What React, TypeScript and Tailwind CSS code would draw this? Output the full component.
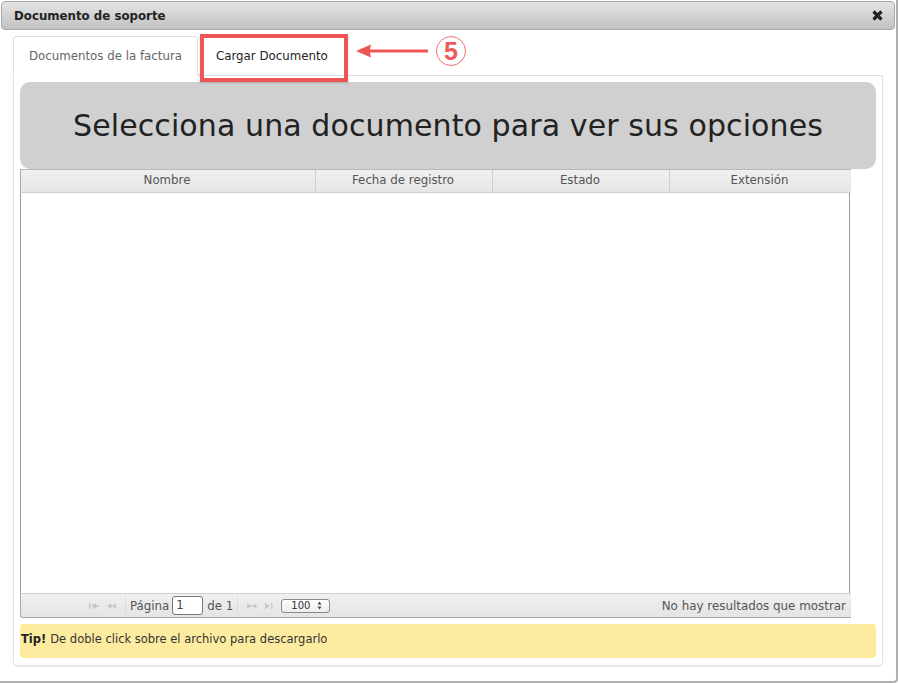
import React from "react";

const font = { fontFamily: '"DejaVu Sans", Verdana, sans-serif' };

function Pager({ d }: { d: string }) {
  return (
    <svg width="12" height="8" viewBox="0 0 12 8" className="mx-[3px]">
      <path d={d} fill="#c8c8c8" />
    </svg>
  );
}

function Sep() {
  return <div className="w-px h-[18px] bg-[#dcdcdc] mx-[1px]" />;
}

export default function App() {
  return (
    <div style={font} className="w-[898px] h-[683px] bg-white overflow-hidden relative">
      <div className="w-[898px] h-[683px] border-r-2 border-b-2 border-[#b0b0b0] rounded-br-[4px] flex flex-col">
        <div className="h-[29px] mt-px ml-px mr-[1px] flex items-center justify-between pl-[12px] pr-[10px] rounded-[4px] border border-[#a8a8a8] bg-gradient-to-b from-[#e4e4e4] to-[#c2c2c2]">
          <span className="text-[11.8px] font-bold text-[#222] pt-[2px]">Documento de soporte</span>
          <svg width="13" height="13" viewBox="0 0 13 13">
            <path d="M2.5 2.5 L10.5 10.5 M10.5 2.5 L2.5 10.5" stroke="#222" strokeWidth="3.2" strokeLinecap="butt" />
          </svg>
        </div>

        <div className="ml-[13px] mt-[6px] w-[870px] flex h-[40px] relative z-10">
          <div className="w-[185px] h-[40px] pt-[2px] border border-[#dfdfdf] border-b-white bg-white rounded-t-[4px] flex items-center justify-center text-[11.8px] text-[#666]">
            Documentos de la factura
          </div>
          <div className="w-[150px] h-[39px] pt-[2px] ml-[2px] flex items-center pl-[16px] text-[11.8px] text-[#222]">
            Cargar Documento
          </div>
        </div>

        <div className="ml-[13px] -mt-px w-[870px] h-[591px] border border-[#dfdfdf] rounded-b-[4px] pl-[6px] pt-[6px] shadow-[0_1px_1px_rgba(0,0,0,0.08)]">
          <div className="w-[856px] h-[87px] bg-[#d0d0d0] rounded-[10px] flex items-center justify-center text-[30px] text-[#222] tracking-[0.1px]">
            Selecciona una documento para ver sus opciones
          </div>

          <div className="w-[831px] h-[449px] flex flex-col">
            <div className="h-[24px] flex border-t border-[#b8b8b8] border-b border-b-[#cfcfcf] bg-gradient-to-b from-[#f0f0f0] to-[#e6e6e6] text-[11.8px] text-[#555] border-l border-l-[#a8a8a8]">
              <div className="w-[295px] border-r border-[#cfcfcf] flex items-center justify-center pr-[2px]">Nombre</div>
              <div className="w-[177px] border-r border-[#cfcfcf] flex items-center justify-center pr-[2px]">Fecha de registro</div>
              <div className="w-[177px] border-r border-[#cfcfcf] flex items-center justify-center pr-[2px]">Estado</div>
              <div className="flex-1 flex items-center justify-center pr-[2px]">Extensión</div>
            </div>
            <div className="flex-1 w-[830px] bg-white border-l border-r border-[#9c9c9c]" />
            <div className="h-[25px] flex items-center border-t border-[#cfcfcf] border-b border-b-[#a8a8a8] border-l border-l-[#a8a8a8] rounded-bl-[3px] bg-gradient-to-b from-[#f0f0f0] to-[#e4e4e4] text-[11.8px] text-[#555]">
              <div className="ml-[64px] flex items-center">
                <Pager d="M1 1h1.5v6H1zM3 4l5-3v6zM8 3h3v2H8z" />
                <Pager d="M1 4l4-3v6zM5 3h1v2H5zM6 4l4-3v6z" />
              </div>
              <div className="ml-[3px]"><Sep /></div>
              <span className="ml-[3px] pt-[2px]">Página</span>
              <div className="w-[31px] h-[19px] ml-[3px] border border-[#777] rounded-[3px] bg-white flex items-center pl-[3px] pt-px text-[#444]">1</div>
              <span className="ml-[4px] pt-[2px]">de 1</span>
              <div className="ml-[3px]"><Sep /></div>
              <div className="ml-[4px] flex items-center">
                <Pager d="M1 1l5 3-5 3zM6 3h3v2H6zM9 1l2 3-2 3z" />
                <Pager d="M1 1l5 3-5 3zM7 1h1.5v6H7z" />
              </div>
              <div className="w-[49px] h-[14px] ml-[2px] border border-[#8a8a8a] rounded-[3px] bg-gradient-to-b from-white to-[#ececec] flex items-center justify-between pl-[9px] pr-[7px] text-[10px] text-[#333]">
                <span>100</span>
                <svg width="5" height="9" viewBox="0 0 5 9">
                  <path d="M2.5 0.5L4.5 3.5H0.5zM2.5 8.5L0.5 5.5H4.5z" fill="#444" />
                </svg>
              </div>
              <span className="ml-auto mr-[5px] pt-[2px] text-[11.9px]">No hay resultados que mostrar</span>
            </div>
          </div>

          <div className="w-[856px] h-[34px] mt-[6px] bg-[#fdeba0] rounded-[4px] flex items-center pb-[3px] pl-px text-[11.5px] text-[#333]">
            <b className="text-[#222]">Tip!</b>
            <span className="ml-[4px]">De doble click sobre el archivo para descargarlo</span>
          </div>
        </div>
      </div>

      <div className="absolute left-[200px] top-[34px] w-[148px] h-[48px] border-[4px] border-[#ee5555] z-20 shadow-[0_1px_2px_rgba(0,0,0,0.2)]" />

      <svg className="absolute left-[350px] top-[34px] z-20" width="125" height="36" viewBox="0 0 125 36">
        <path d="M6 17 L21 10.5 L20 15.5 L78 15.5 L78 18.5 L20 18.5 L21 23.5 Z" fill="#ee5555" />
        <circle cx="101" cy="17" r="14.5" fill="#fff" stroke="#ee7070" strokeWidth="1" />
      </svg>
      <span className="absolute left-[444px] top-[36px] z-30 text-[25px] leading-[30px] font-bold text-[#ee5a5a]" style={{ fontFamily: '"Liberation Sans", sans-serif' }}>5</span>
    </div>
  );
}
